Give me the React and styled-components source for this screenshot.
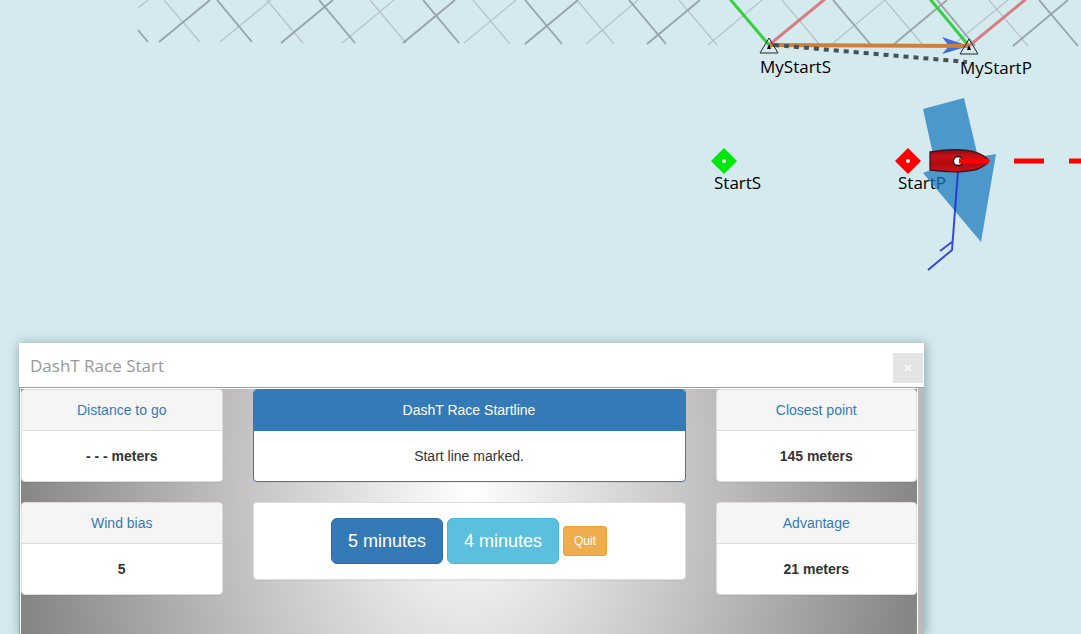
import React from "react";
import styled, { createGlobalStyle } from "styled-components";

const GlobalStyle = createGlobalStyle`
  *, *::before, *::after { box-sizing: border-box; }
  body {
    margin: 0;
    background: #d5eaee;
    color: #333;
    font-family: "Liberation Sans", Arial, sans-serif;
    font-size: 14px;
    line-height: 20px;
  }
`;

const Page = styled.main`
  display: flex;
  flex-direction: column;
  height: 100vh;
  overflow: hidden;
`;

const Chart = styled.section`
  flex: 0 0 343px;
  overflow: hidden;
`;

const ChartDrawing = styled.svg`
  display: block;
  width: 100%;
  height: 343px;
`;

const ChartLabel = styled.text`
  font-family: "Open Sans", "Noto Sans", sans-serif;
  font-size: 17px;
  fill: #000;
`;

const Window = styled.section`
  flex: 1 0 auto;
  display: flex;
  flex-direction: column;
  margin: 0 157px 0 19px;
  background: #fff;
  box-shadow: 1px 1px 10px 1px rgba(60, 90, 95, 0.45);
`;

const TitleBar = styled.header`
  display: flex;
  align-items: center;
  justify-content: space-between;
  height: 45px;
  padding: 2px 1px 0 11px;
  border-bottom: 1px solid #a0a0a0;
`;

const Title = styled.h1`
  margin: 0;
  font-family: "Open Sans", "Noto Sans", sans-serif;
  font-size: 17px;
  font-weight: 400;
  color: #999;
`;

const CloseButton = styled.button`
  display: flex;
  align-items: center;
  justify-content: center;
  width: 30px;
  height: 30px;
  margin-top: 4px;
  padding: 0;
  border: 0;
  background: #e4e4e4;
`;

const Frame = styled.div`
  flex: 1;
  display: flex;
  padding-right: 6px;
  border-left: 1px solid #a0a0a0;
  background: #bababa;
`;

const Dashboard = styled.div`
  flex: 1;
  overflow: hidden;
  border: 1px solid #fff;
  border-bottom: 0;
  background: radial-gradient(ellipse 51% 620px at 50% 101px, #fff, #c4c2c2 50%, #858383);
`;

const Row = styled.div`
  display: flex;
  margin: 0 -15px;
`;

const Column = styled.div`
  flex: 0 0 ${(p) => p.$share};
  padding: 0 15px;
`;

const Panel = styled.article`
  margin-bottom: 20px;
  overflow: hidden;
  border: 1px solid ${(p) => (p.$primary ? "#337ab7" : "#ddd")};
  border-radius: 4px;
  background: #fff;
  text-align: center;
  box-shadow: 0 1px 1px rgba(0, 0, 0, 0.05);
`;

const PanelHeading = styled.h2`
  margin: 0;
  padding: 10px 15px;
  border-bottom: 1px solid ${(p) => (p.$primary ? "#337ab7" : "#ddd")};
  background: ${(p) => (p.$primary ? "#337ab7" : "#f5f5f5")};
  color: ${(p) => (p.$primary ? "#fff" : "#337ab7")};
  font-size: 14px;
  font-weight: 400;
`;

const PanelBody = styled.div`
  padding: 15px;
  font-weight: ${(p) => (p.$strong ? 700 : 400)};
`;

const Actions = styled.div`
  display: flex;
  align-items: center;
  justify-content: center;
  gap: 4px;
  padding: 15px;
`;

const Button = styled.button`
  padding: 10px 16px;
  border: 1px solid ${(p) => p.$border};
  border-radius: 6px;
  background: ${(p) => p.$fill};
  color: #fff;
  font-family: inherit;
  font-size: 18px;
  line-height: 24px;
`;

const SmallButton = styled(Button)`
  padding: 5px 10px;
  border-radius: 3px;
  font-size: 12px;
  line-height: 18px;
`;

const heavyLines = [
  [138, 30, 148, 42], [159, 42, 210, 0], [217, 0, 252, 42], [281, 43, 333, 0],
  [319, 0, 355, 43], [403, 43, 455, 0], [423, 0, 459, 43], [525, 44, 578, 0],
  [525, 0, 562, 44], [629, 0, 666, 44], [647, 44, 700, 0], [833, 0, 871, 45],
  [893, 45, 947, 0], [937, 0, 975, 46], [1013, 46, 1068, 0], [1039, 0, 1078, 46],
];

const lightLines = [
  [138, 8, 148, 0], [164, 0, 200, 42], [220, 42, 271, 0], [267, 0, 303, 43],
  [342, 43, 394, 0], [370, 0, 406, 43], [464, 43, 516, 0], [473, 0, 510, 44],
  [577, 0, 614, 44], [586, 44, 638, 0], [679, 0, 717, 45], [708, 45, 762, 0],
  [782, 0, 820, 45], [832, 44, 885, 0], [885, 0, 923, 45], [953, 45, 1008, 0],
  [989, 0, 1028, 46],
];

const Lines = ({ items, ...rest }) => (
  <g {...rest}>
    {items.map(([x1, y1, x2, y2]) => (
      <line key={`${x1}-${y1}-${x2}`} x1={x1} y1={y1} x2={x2} y2={y2} />
    ))}
  </g>
);

const Mark = ({ x, y }) => (
  <g>
    <path d={`M${x} ${y - 8} L${x + 9} ${y + 7} H${x - 9} Z`} fill="none" stroke="#26292a" />
    <path d={`M${x} ${y - 2} L${x + 2} ${y + 3} H${x - 2} Z`} fill="#000" />
  </g>
);

const Buoy = ({ x, y, fill }) => (
  <g>
    <path d={`M${x} ${y - 13} L${x + 13} ${y} L${x} ${y + 13} L${x - 13} ${y} Z`} fill={fill} />
    <circle cx={x} cy={y} r="2" fill="#fff" />
  </g>
);

const StartChart = () => (
  <ChartDrawing role="img" aria-label="Start line chart">
    <defs>
      <linearGradient id="hull" x1="0" y1="0" x2="0" y2="1">
        <stop offset="0" stopColor="#8c0a10" />
        <stop offset="0.3" stopColor="#c8101a" />
        <stop offset="0.6" stopColor="#b00c12" />
        <stop offset="1" stopColor="#d0101c" />
      </linearGradient>
    </defs>
    <Lines items={lightLines} stroke="#b6c3c6" strokeWidth="1.2" />
    <Lines items={heavyLines} stroke="#98a4a8" strokeWidth="1.9" />
    <Lines items={[[769, 45, 825, -1], [969, 46, 1026, -1]]} stroke="#d57f83" strokeWidth="3" />
    <Lines items={[[730, -1, 769, 45], [930, -1, 969, 46]]} stroke="#37cf43" strokeWidth="3" />
    <path d="M942 37 L969 46 L942 54 L949 46 Z" fill="#3b70dc" />
    <line x1="769" y1="45" x2="969" y2="46" stroke="#cf7f3c" strokeWidth="4" />
    <line x1="774" y1="45" x2="967" y2="62" stroke="#465355" strokeWidth="4" strokeDasharray="5 5" />
    <Mark x={769} y={46} />
    <Mark x={969} y={47} />
    <ChartLabel x="760" y="73">MyStartS</ChartLabel>
    <ChartLabel x="960" y="74">MyStartP</ChartLabel>
    <Buoy x={724} y={161} fill="#00e80b" />
    <Buoy x={908} y={161} fill="#fe0000" />
    <ChartLabel x="714" y="189">StartS</ChartLabel>
    <ChartLabel x="898" y="189">StartP</ChartLabel>
    <path d="M923 109 L964 98 L978 157 L996 154 L981 242 L923 173 L936 168 Z" fill="#1878bd" fillOpacity="0.72" />
    <path d="M958 171 L952 250 L928 270 M952 242 L940 251" fill="none" stroke="#1c2bdc" strokeOpacity="0.85" strokeWidth="2" />
    <path d="M930 152 Q960 147 978 153 Q987 157 989 161 Q987 165 978 169 Q960 174 930 170 Z" fill="url(#hull)" stroke="#441216" strokeWidth="1.3" />
    <circle cx="958" cy="161" r="4.5" fill="#fff" stroke="#111" strokeWidth="1.3" />
    <line x1="959" y1="161" x2="1081" y2="161" stroke="#fe0000" strokeWidth="5" strokeDasharray="30 25" />
  </ChartDrawing>
);

const Reading = ({ label, value }) => (
  <Panel>
    <PanelHeading>{label}</PanelHeading>
    <PanelBody $strong>{value}</PanelBody>
  </Panel>
);

export default function App() {
  return (
    <>
      <GlobalStyle />
      <Page>
        <Chart>
          <StartChart />
        </Chart>
        <Window>
          <TitleBar>
            <Title>DashT Race Start</Title>
            <CloseButton type="button" aria-label="Close">
              <svg width="8" height="8" viewBox="0 0 8 8" stroke="#f6f6f6" strokeWidth="2">
                <path d="M1 1 L7 7 M7 1 L1 7" />
              </svg>
            </CloseButton>
          </TitleBar>
          <Frame>
            <Dashboard>
              <Row>
                <Column $share="25%">
                  <Reading label="Distance to go" value="- - - meters" />
                  <Reading label="Wind bias" value="5" />
                </Column>
                <Column $share="50%">
                  <Panel $primary>
                    <PanelHeading $primary>DashT Race Startline</PanelHeading>
                    <PanelBody>Start line marked.</PanelBody>
                  </Panel>
                  <Panel>
                    <Actions>
                      <Button type="button" $fill="#337ab7" $border="#2e6da4">5 minutes</Button>
                      <Button type="button" $fill="#5bc0de" $border="#46b8da">4 minutes</Button>
                      <SmallButton type="button" $fill="#f0ad4e" $border="#eea236">Quit</SmallButton>
                    </Actions>
                  </Panel>
                </Column>
                <Column $share="25%">
                  <Reading label="Closest point" value="145 meters" />
                  <Reading label="Advantage" value="21 meters" />
                </Column>
              </Row>
            </Dashboard>
          </Frame>
        </Window>
      </Page>
    </>
  );
}
